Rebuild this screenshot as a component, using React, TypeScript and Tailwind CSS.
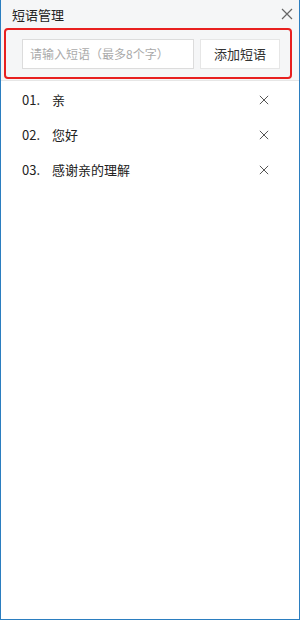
import React from 'react';

const phrases = ['亲', '您好', '感谢亲的理解'];

function CloseIcon({ size = 12, color = '#555' }: { size?: number; color?: string }) {
  return (
    <svg width={size} height={size} viewBox="0 0 12 12" fill="none">
      <path d="M1 1L11 11M11 1L1 11" stroke={color} strokeWidth="1.2" />
    </svg>
  );
}

export default function App() {
  return (
    <div
      className="w-[300px] h-[620px] flex flex-col border-x border-b border-[#2b7ec0] bg-white text-[13px] text-[#222]"
      style={{ fontFamily: '"Microsoft YaHei", "Noto Sans CJK SC", sans-serif' }}
    >
      {/* header */}
      <div className="bg-[#f5f6f7] border-b border-[#e6e6e6]">
        <div className="h-[28px] flex items-center justify-between pl-[11px] pr-[6px]">
          <span className="text-[13px] leading-none">短语管理</span>
          <CloseIcon size={12} color="#666" />
        </div>
        <div className="ml-[3px] w-[288px] mb-[1px] h-[51px] border-2 border-[#e8201f] rounded-[4px] flex items-center gap-[6px] pl-[16px]">
          <input
            className="w-[172px] h-[30px] border border-[#dcdcdc] bg-white px-[7px] text-[12px] outline-none placeholder:text-[#aaa]"
            placeholder="请输入短语（最多8个字）"
          />
          <button className="w-[80px] h-[30px] border border-[#e6e6e6] bg-white text-[13px] text-[#333]">
            添加短语
          </button>
        </div>
      </div>

      {/* list */}
      <div className="flex flex-col pt-[1px]">
        {phrases.map((p, i) => (
          <div key={p} className="h-[35px] flex items-center pl-[21px] pr-[30px]">
            <span className="w-[30px]">0{i + 1}.</span>
            <span className="flex-1">{p}</span>
            <CloseIcon size={10} color="#555" />
          </div>
        ))}
      </div>
    </div>
  );
}
